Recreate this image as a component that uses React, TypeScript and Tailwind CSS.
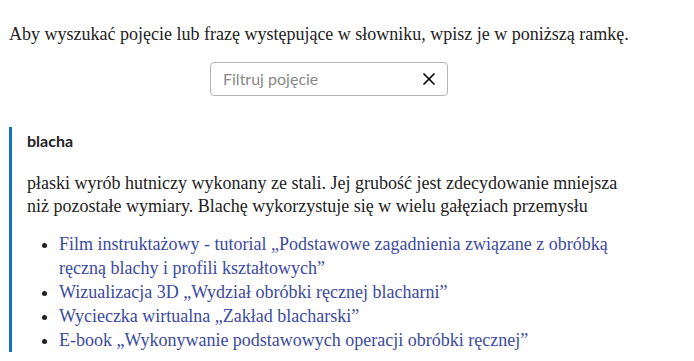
import { X } from 'lucide-react';

const links = [
  'Film instruktażowy - tutorial „Podstawowe zagadnienia związane z obróbką ręczną blachy i profili kształtowych”',
  'Wizualizacja 3D „Wydział obróbki ręcznej blacharni”',
  'Wycieczka wirtualna „Zakład blacharski”',
  'E-book „Wykonywanie podstawowych operacji obróbki ręcznej”',
];

const App = () => {
  return (
    <div className="min-h-screen bg-white px-[9px] pt-[22px] text-[#222] font-['Liberation_Serif',serif]">
      <div className="w-[640px]">
        <p className="text-[18px] leading-[24px]">
          Aby wyszukać pojęcie lub frazę występujące w słowniku, wpisz je w poniższą ramkę.
        </p>

        <div className="mt-[16px] ml-[201px] flex h-[34px] w-[238px] items-center rounded border border-[#b5b5b5] pl-[12px] pr-[8px]">
          <span className="flex-1 text-[16px] text-[#888] font-['Lato',sans-serif]">Filtruj pojęcie</span>
          <X className="h-[20px] w-[20px] text-black" strokeWidth={2} />
        </div>

        <div className="mt-[31px] border-l-[3px] border-[#1a73b8] pl-[15px] pt-[2px]">
          <h3 className="text-[16px] font-bold leading-[24px] font-['Lato',sans-serif]">blacha</h3>
          <p className="mt-[19px] max-w-[605px] text-[18px] leading-[23px]">
            płaski wyrób hutniczy wykonany ze stali. Jej grubość jest zdecydowanie mniejsza niż pozostałe wymiary.
            Blachę wykorzystuje się w wielu gałęziach przemysłu
          </p>
          <ul className="mt-[14px] list-disc pl-[32px] text-[18px] leading-[24px] text-[#3b4a9f]">
            {links.map((l) => (
              <li key={l} className="marker:text-[#222]">
                {l}
              </li>
            ))}
          </ul>
        </div>
      </div>
    </div>
  );
};

export default App;
